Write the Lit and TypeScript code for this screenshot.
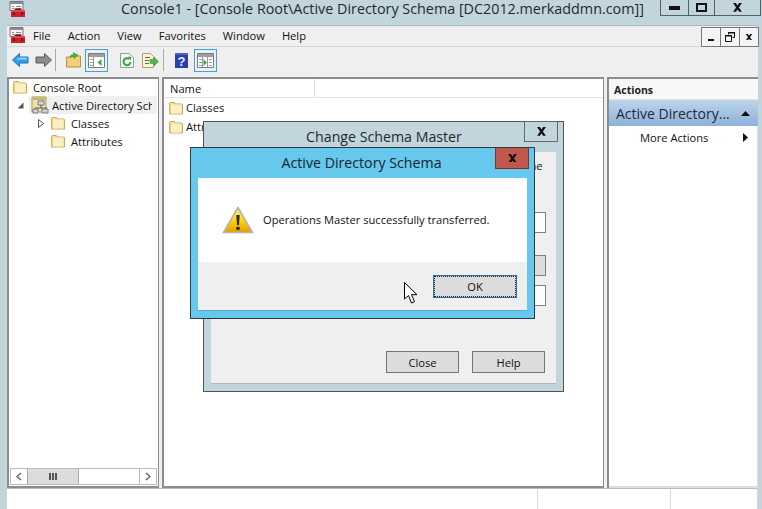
import { LitElement, html, css, svg } from "lit";
import { customElement } from "lit/decorators.js";

const folder = (cls = "ico") => html`<svg class=${cls} viewBox="0 0 16 14" width="16" height="14">
  <path d="M1.5 13V2.500q0-1 1-1h4l1 1.500h6q1 0 1 1V13z" fill="#f6dc8c" stroke="#c9a95a"/>
  <path d="M3 3.500h10.500V12.500H3z" fill="#fbf0c4"/>
  <path d="M1.5 13V4h1V13z" fill="#e4bd62"/>
</svg>`;

const appIcon = html`<svg viewBox="0 0 17 17" width="17" height="17">
  <path d="M1 .5h13v9H1z" fill="#f4f4f4" stroke="#777"/>
  <path d="M1 1h13v2H1z" fill="#8a8f94"/>
  <path d="M3 5h2v1H3zM7 5h5v1H7zM3 7h2v1H3zM7 7h5v1H7z" fill="#889"/>
  <path d="M2 9h14v7H2z" fill="#c8232c"/>
  <path d="M2 9h14v2H2z" fill="#e0444c"/>
  <path d="M5.500 7.500h7V9h-7zM4 11h2v3H4zM12 11h2v3h-2z" fill="#7d1218"/>
</svg>`;

const adIcon = html`<svg viewBox="0 0 18 18" width="18" height="18">
  <path d="M1 1h14v15H1z" fill="#f0e2a8" stroke="#a89a66"/>
  <path d="M2 2h12v2H2z" fill="#c9b36a"/>
  <path d="M7 5h6v4H7z" fill="#d9d9d9" stroke="#6f7a88"/>
  <path d="M10 9v3M4 12h12M4 12v1M15 12v1" stroke="#6b5a2a" fill="none"/>
  <path d="M2 13h5v4H2zM11 13h6v4h-6z" fill="#cfd6de" stroke="#6f7a88"/>
</svg>`;

const warning = html`<svg viewBox="0 0 32 28" width="32" height="28">
  <defs><linearGradient id="w" x1="0" y1="0" x2="0" y2="1">
    <stop offset="0" stop-color="#fff07a"/><stop offset=".5" stop-color="#ffd60a"/><stop offset="1" stop-color="#e89c00"/>
  </linearGradient></defs>
  <path d="M16 1.500 30.500 26.500H1.500z" fill="url(#w)" stroke="#b4b4ac" stroke-width="1.600" stroke-linejoin="round"/>
  <path d="M14.300 9h3.400l-.7 10h-2z" fill="#2b2b2b"/>
  <circle cx="16" cy="22.300" r="1.900" fill="#2b2b2b"/>
</svg>`;

const cursor = html`<svg viewBox="0 0 13 22" width="13" height="22">
  <path d="M.5.500V17l4-3.500 3 7.500 3-1.300-3-7h5.500z" fill="#fff" stroke="#000" stroke-linejoin="round"/>
</svg>`;

const paneIcon = (first: boolean) => html`<svg viewBox="0 0 17 15" width="17" height="15">
  <path d="M.5.500h16v14H.5z" fill="#f2f2f2" stroke="#7c7c7c"/>
  <path d="M1 1h15v3H1z" fill="#9aa0a6"/>
  <path d="M1 5h15v9H1z" fill="#fff"/>
  <path d="M5.500 4v10" stroke="#9a9a9a"/>
  <path d="M2 6h3v1H2zM2 9h3v1H2zM2 12h3v1H2z" fill="#8aa0c8"/>
  ${first
    ? svg`<path d="M13.500 6 9.500 9.500 13.500 13z" fill="#3faa3f"/>`
    : svg`<path d="M10.500 4v10" stroke="#9a9a9a"/><path d="M12 6h3v1h-3zM12 9h3v1h-3zM12 12h3v1h-3z" fill="#8aa0c8"/><path d="M6.500 6 10 9.500 6.500 13z" fill="#3faa3f"/>`}
</svg>`;

@customElement("app-root")
export class AppRoot extends LitElement {
  static styles = css`
    :host { display: block; width: 762px; height: 509px; overflow: hidden; position: relative;
      font-family: "Open Sans", "Noto Sans", sans-serif; font-size: 11.150px; color: #111; }
    svg { display: block; flex: none; }
    .frame { display: flex; flex-direction: column; height: 509px; background: #c2d5dc; }
    .title { display: flex; height: 25px; flex: none; padding-left: 9px; position: relative; }
    .title .app { margin-top: 1px; }
    .title .txt { position: absolute; left: 121px; top: -1px; font-size: 14.350px; line-height: 20px; color: #1c2a30; white-space: nowrap; }
    .winbtns { margin-left: auto; display: flex; height: 15px; border: 1px solid #4f6068; border-top: none; margin-right: 1px; }
    .winbtns > div { display: flex; align-items: center; justify-content: center; border-left: 1px solid #4f6068; }
    .winbtns > div:first-child { border-left: none; width: 27px; }
    .winbtns > div:nth-child(2) { width: 25px; }
    .winbtns > div:nth-child(3) { width: 45px; }
    .body { margin-left: 7px; width: 751px; flex: 1; display: flex; flex-direction: column; background: #efefef; }
    .menu { height: 22px; flex: none; display: flex; align-items: center; border-top: 1px solid #a9babf; border-bottom: 1px solid #d4d4d4; box-sizing: border-box; padding: 0 0 1px 2px; }
    .menu span { margin-right: 17px; }
    .menu .app { margin-right: 7px; }
    .mdi { margin-left: auto; display: flex; height: 18px; border: 1px solid #777; background: #f4f4f4; margin-right: -1px; margin-top: 3px; position: relative; z-index: 1; }
    .mdi > div { width: 18px; display: flex; align-items: center; justify-content: center; border-left: 1px solid #777; }
    .mdi > div:first-child { border-left: none; }
    .tools { height: 30px; flex: none; display: flex; align-items: center; padding: 0 0 4px 5px; box-sizing: border-box; }
    .tools > * { flex: none; }
    .sep { width: 1px; height: 22px; background: #aaa; }
    .hl { width: 21px; height: 21px; border: 1px solid #3ea4e0; display: flex; align-items: center; justify-content: center; }
    .panes { flex: 1; display: flex; min-height: 0; }
    .pane { background: #fff; border: 2px solid #8c8c8c; box-sizing: border-box; position: relative; }
    .left { width: 152px; margin-right: 3px; border-right-width: 1px; display: flex; flex-direction: column; }
    .mid { width: 442px; margin-right: 3px; border-right-width: 1px; }
    .right { width: 151px; border: none; border-top: 2px solid #8c8c8c; border-left: 2px solid #8c8c8c; box-shadow: inset -1px -2px 0 #ddd; }
    .node { display: flex; align-items: center; height: 18px; white-space: nowrap; }
    .node svg.ico { margin-right: 5px; }
    .tree { flex: 1; overflow: hidden; margin-top: -1px; }
    .n0 { padding-left: 3px; }
    .n1 { padding-left: 8px; }
    .n1 .tri { margin-right: 5px; }
    .n1 .sel { display: flex; align-items: center; background: #f0f0f0; width: 128px; height: 18px; padding-left: 2px; box-sizing: border-box; }
    .n1 .sel svg { margin-right: 3px; }
    .n1 .sel span { width: 100px; overflow: hidden; }
    .n2 { padding-left: 29px; }
    .n2 .tri { margin-right: 6px; }
    .n3 { padding-left: 41px; }
    .scroll { height: 17px; margin: 0 1px 1px 1px; border: 1px solid #bbb; display: flex; flex: none; box-sizing: border-box; }
    .scroll > div { display: flex; align-items: center; justify-content: center; }
    .sb { width: 16px; }
    .thumb { width: 52px; background: #dcdcdc; border-left: 1px solid #aaa; border-right: 1px solid #aaa; box-sizing: border-box; }
    .trk { flex: 1; border-right: 1px solid #bbb; }
    .head { height: 19px; display: flex; border-bottom: 1px solid #e2e2e2; box-sizing: border-box; }
    .head div { width: 151px; border-right: 1px solid #e2e2e2; padding-left: 6px; box-sizing: border-box; line-height: 19px; }
    .row { display: flex; align-items: center; height: 19px; padding-left: 4px; }
    .row svg { margin-right: 2px; }
    .ahead { height: 20px; padding-left: 5px; font-weight: 700; font-size: 10.500px; line-height: 22px; border-bottom: 1px solid #e2e2e2; background: #f7f7f7; color: #222; }
    .aband { height: 26px; display: flex; align-items: center; padding: 0 8px 0 7px; font-size: 14px; color: #1c2a3a; background: linear-gradient(#bcd4ea, #8db2d8); justify-content: space-between; box-sizing: border-box; }
    .amore { display: flex; justify-content: space-between; align-items: center; height: 22px; padding: 0 10px 0 31px; }
    .status { height: 21px; flex: none; background: #fff; display: flex; border-top: 1px solid #bbb; box-sizing: border-box; }
    .status div:first-child { width: 531px; border-right: 1px solid #d8d8d8; }
    .status div:nth-child(2) { width: 132px; border-right: 1px solid #d8d8d8; }
    .status div:nth-child(3) { width: 86px; border-right: 1px solid #d8d8d8; }

    .dlg { position: absolute; box-sizing: border-box; }
    .schema { left: 203px; top: 121px; width: 361px; height: 271px; background: #c2d5dc; border: 1px solid #4d5558; }
    .schema .t { position: absolute; left: 0; width: 100%; top: 5px; text-align: center; font-size: 14.200px; line-height: 20px; color: #1c2a30; padding-left: 1px; box-sizing: border-box; }
    .schema .x { position: absolute; right: 5px; top: -1px; width: 34px; height: 21px; border: 1px solid #5d6b70; box-sizing: border-box; display: flex; align-items: center; justify-content: center; }
    .schema .in { position: absolute; left: 7px; right: 7px; top: 30px; bottom: 7px; background: #efefef; border-bottom: 1px solid #b0b8bc; }
    .f { position: absolute; box-sizing: border-box; border: 1px solid #808080; background: #fff; right: 10px; width: 60px; height: 21px; }
    .f.g { background: #dcdcdc; }
    .clip { position: absolute; left: 315px; top: 6px; }
    .btn { position: absolute; box-sizing: border-box; height: 22px; width: 73px; border: 1px solid #757575; background: #dcdcdc; display: flex; align-items: center; justify-content: center; }
    .ad { left: 190px; top: 147px; width: 345px; height: 172px; background: #66c8ec; border: 1px solid #2f3a40; }
    .ad .t { position: absolute; left: 0; width: 100%; top: 5px; text-align: center; font-size: 14.200px; line-height: 20px; color: #16242c; padding-right: 2px; box-sizing: border-box; }
    .ad .x { position: absolute; right: 5px; top: 0; width: 34px; height: 21px; background: #c1584e; border: 1px solid #6d3a34; border-top: none; box-sizing: border-box; display: flex; align-items: center; justify-content: center; }
    .ad .in { position: absolute; left: 7px; right: 7px; top: 30px; bottom: 7px; background: #efefef; border-bottom: 1px solid #58a8c8; }
    .ad .msg { height: 84px; background: #fff; display: flex; align-items: center; padding-left: 24px; box-sizing: border-box; }
    .ad .msg span { margin-left: 9px; position: relative; top: -1px; }
    .ok { left: 235px; top: 97px; width: 84px; height: 23px; background: #dcdcdc; border: 1px solid #2a70b0; outline: 1px dotted #222; outline-offset: -2px; }
    .cur { position: absolute; left: 404px; top: 282px; }
  `;

  render() {
    const X = (s: number) => html`<svg viewBox="0 0 10 8" width=${s} height=${s * 0.8}><path d="M1 0h2.500L5 2.200 6.500 0H9L6.300 4 9 8H6.500L5 5.800 3.500 8H1l2.700-4z" fill="#111"/></svg>`;
    return html`
      <div class="frame">
        <div class="title">
          <div class="app">${appIcon}</div>
          <div class="txt">Console1 - [Console Root\\Active Directory Schema [DC2012.merkaddmn.com]]</div>
          <div class="winbtns">
            <div><svg width="11" height="4"><rect width="11" height="4" fill="#111"/></svg></div>
            <div><svg width="11" height="9"><path d="M1 1h9v7H1z" fill="none" stroke="#111" stroke-width="2"/></svg></div>
            <div>${X(11)}</div>
          </div>
        </div>
        <div class="body">
          <div class="menu">
            <div class="app">${appIcon}</div>
            <span>File</span><span>Action</span><span>View</span><span>Favorites</span><span>Window</span><span>Help</span>
            <div class="mdi">
              <div><svg width="8" height="8"><rect x="1" y="6" width="6" height="2" fill="#111"/></svg></div>
              <div><svg width="10" height="10"><path d="M3.500 2.500V.5h6v5H7.500M.5 3.500h6v6h-6z" fill="none" stroke="#111"/><path d="M3 0h7v1.500H3zM0 3h7v1.500H0z" fill="#111"/></svg></div>
              <div>${X(8)}</div>
            </div>
          </div>
          <div class="tools">
            <svg viewBox="0 0 17 14" width="17" height="14"><path d="M.5 7 7.500.5V4H16v6H7.500v3.500z" fill="#2f9fe8" stroke="#1a6eb8"/><path d="M7.500 4.500H15v2H4z" fill="#8fd0f8"/></svg>
            <svg style="margin-left:6px" viewBox="0 0 17 14" width="17" height="14"><path d="M16.500 7 9.500.5V4H1v6h8.500v3.500z" fill="#8d8d8d" stroke="#5a5a5a"/></svg>
            <div class="sep" style="margin-left:3px"></div>
            <svg style="margin-left:10px" viewBox="0 0 15 16" width="15" height="16"><path d="M.5 15V5h4l1-1h9v11z" fill="#f2cf7c" stroke="#b8913c"/><path d="M4 6 5 3l3-.5L7 .5l5 2.500-4 3.500-.5-2-2 .5z" fill="#4db33d" stroke="#2f8a2a" stroke-width=".5"/></svg>
            <div class="hl" style="margin-left:4px">${paneIcon(true)}</div>
            <svg style="margin-left:12px" viewBox="0 0 14 15" width="14" height="15"><path d="M.5.500h9l4 4v10H.5z" fill="#f6f6f6" stroke="#9a9a9a"/><path d="M10.500 9a3.500 3.500 0 1 1-1.200-3" fill="none" stroke="#2fa83a" stroke-width="2"/><path d="M8 3.500 11.500 4 10.500 7.500z" fill="#2fa83a"/></svg>
            <svg style="margin-left:8px" viewBox="0 0 17 15" width="17" height="15"><path d="M.5.500h8l3 3v11H.5z" fill="#f9f3d0" stroke="#a8a07a"/><path d="M3 4h5v1H3zM3 7h4v1H3zM3 10h4v1H3z" fill="#666"/><path d="M8 6.500h4V4l4.500 4.500L12 13v-2.500H8z" fill="#4fb848" stroke="#2f8a2a" stroke-width=".5"/></svg>
            <div class="sep" style="margin-left:4px"></div>
            <svg style="margin-left:11px" viewBox="0 0 13 15" width="13" height="15"><rect width="13" height="15" fill="#2a3fa8"/><path d="M0 0h13v2H0z" fill="#4f62c8"/><text x="6.500" y="12.500" text-anchor="middle" font-size="13" font-weight="700" fill="#e8ecff" font-family="Liberation Sans">?</text></svg>
            <div class="hl" style="margin-left:6px">${paneIcon(false)}</div>
          </div>
          <div class="panes">
            <div class="pane left">
              <div class="tree">
                <div class="node n0">${folder()}<span>Console Root</span></div>
                <div class="node n1"><svg class="tri" width="7" height="7"><path d="M6.500.500v6h-6z" fill="#555"/></svg><div class="sel">${adIcon}<span>Active Directory Schema</span></div></div>
                <div class="node n2"><svg class="tri" width="6" height="9"><path d="M.5.500 5.500 4.500.5 8.500z" fill="#fff" stroke="#555"/></svg>${folder()}<span>Classes</span></div>
                <div class="node n3">${folder()}<span>Attributes</span></div>
              </div>
              <div class="scroll">
                <div class="sb"><svg width="6" height="9"><path d="M5 1 1 4.500 5 8" fill="none" stroke="#666" stroke-width="1.500"/></svg></div>
                <div class="thumb"><svg width="8" height="7"><path d="M0 0h2v7H0zM3 0h2v7H3zM6 0h2v7H6z" fill="#555"/></svg></div>
                <div class="trk"></div>
                <div class="sb"><svg width="6" height="9"><path d="M1 1 5 4.500 1 8" fill="none" stroke="#666" stroke-width="1.500"/></svg></div>
              </div>
            </div>
            <div class="pane mid">
              <div class="head"><div>Name</div></div>
              <div class="row">${folder()}Classes</div>
              <div class="row">${folder()}Attributes</div>
            </div>
            <div class="pane right">
              <div class="ahead">Actions</div>
              <div class="aband"><span>Active Directory...</span><svg width="9" height="5"><path d="M0 5 4.500 0 9 5z" fill="#111"/></svg></div>
              <div class="amore"><span>More Actions</span><svg width="5" height="9"><path d="M0 0 5 4.500 0 9z" fill="#111"/></svg></div>
            </div>
          </div>
          <div class="status"><div></div><div></div><div></div></div>
        </div>
      </div>

      <div class="dlg schema">
        <div class="t">Change Schema Master</div>
        <div class="x">${X(11)}</div>
        <div class="in">
          <div class="clip">me</div>
          <div class="f" style="top:60px"></div>
          <div class="f g" style="top:103px"></div>
          <div class="f" style="top:133px"></div>
          <div class="btn" style="left:175px;top:199px">Close</div>
          <div class="btn" style="left:261px;top:199px">Help</div>
        </div>
      </div>

      <div class="dlg ad">
        <div class="t">Active Directory Schema</div>
        <div class="x">${X(11)}</div>
        <div class="in">
          <div class="msg">${warning}<span>Operations Master successfully transferred.</span></div>
          <div class="btn ok">OK</div>
        </div>
      </div>
      <div class="cur">${cursor}</div>
    `;
  }
}
